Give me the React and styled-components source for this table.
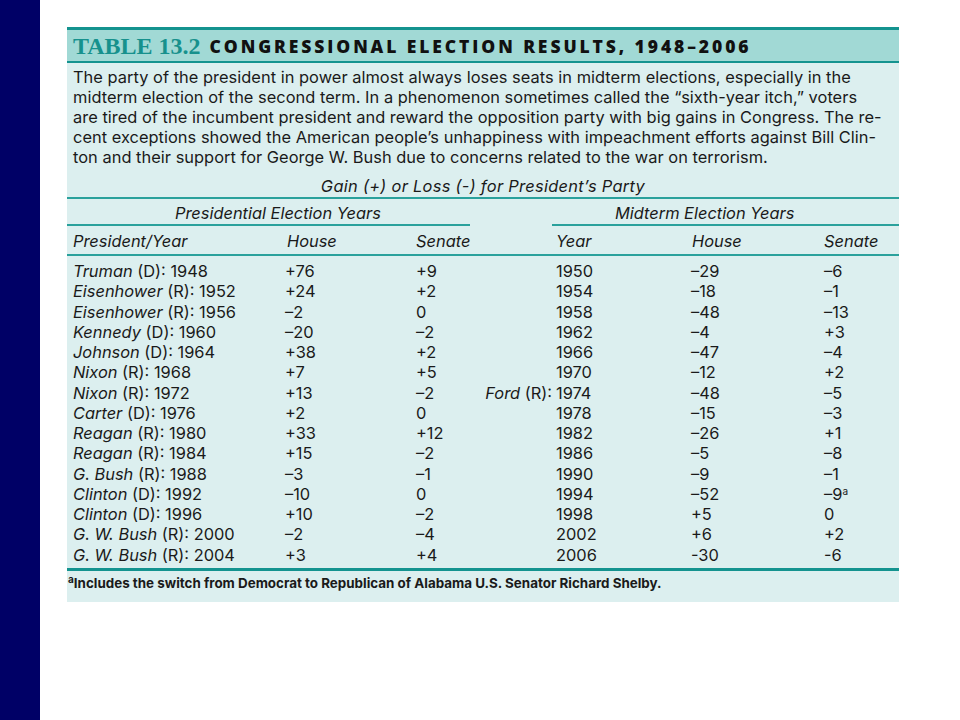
import React from 'react'
import styled, { createGlobalStyle } from 'styled-components'

const Global = createGlobalStyle`
  html, body { margin: 0; padding: 0; background: #ffffff; }
  body { font-family: 'Inter', 'Open Sans', sans-serif; }
`

const Page = styled.div`
  width: 960px;
  height: 720px;
  display: flex;
  overflow: hidden;
  background: #ffffff;
`

const SideBar = styled.div`
  width: 40px;
  background: #000066;
  flex-shrink: 0;
`

const Main = styled.div`
  flex: 1;
  padding: 27px 0 0 27px;
`

const Panel = styled.div`
  width: 832px;
  background: #dcefef;
  color: #1a1a1a;
  padding-bottom: 11px;
`

const TitleBar = styled.div`
  background: #a1d9d5;
  border-top: 3px solid #14938f;
  border-bottom: 2px solid #14938f;
  height: 31px;
  display: flex;
  align-items: center;
  padding-left: 6px;
  gap: 9px;
`

const TableNo = styled.span`
  font-family: 'Liberation Serif', serif;
  font-weight: bold;
  color: #17918d;
  font-size: 24px;
  line-height: 28px;
`

const TableTitle = styled.span`
  font-family: 'Open Sans', sans-serif;
  font-weight: 800;
  font-size: 17.5px;
  line-height: 24px;
  letter-spacing: 2.9px;
  color: #111;
`

const Intro = styled.p`
  margin: 4px 0 0;
  padding: 0 6px;
  font-size: 16.4px;
  line-height: 20px;
  letter-spacing: 0.03px;
  white-space: nowrap;
`

const Caption = styled.div`
  text-align: center;
  font-style: italic;
  font-size: 16.4px;
  line-height: 20px;
  letter-spacing: 0.3px;
  margin-top: 9px;
  padding-bottom: 1px;
  border-bottom: 2px solid #2aa19c;
`

const Groups = styled.div`
  display: grid;
  grid-template-columns: 403px 82px 347px;
  margin-top: 4px;
`

const GroupHead = styled.div`
  font-style: italic;
  font-size: 16.4px;
  line-height: 21px;
  padding-left: ${p => p.$pad}px;
  border-bottom: ${p => (p.$line ? '2px solid #2aa19c' : 'none')};
`

const Grid = styled.div`
  display: grid;
  grid-template-columns: 212px 131px 65px 71px 139px 133px 75px;
  padding-left: 6px;
`

const HeadRow = styled.div`
  display: contents;
`

const HeadCell = styled.div`
  font-style: italic;
  font-size: 16.4px;
  line-height: 20px;
  padding: 5px 0 3px;
  border-bottom: 2px solid #2aa19c;
  margin-left: ${p => (p.$first ? '-6px' : '0')};
  padding-left: ${p => (p.$first ? 6 : p.$pad || 0)}px;
`

const Cell = styled.div`
  font-size: 16.4px;
  line-height: 20.25px;
  padding-left: ${p => p.$pad || 0}px;
  text-align: ${p => (p.$right ? 'right' : 'left')};
  white-space: nowrap;
  padding-top: ${p => (p.$top ? 5 : 0)}px;
  padding-bottom: ${p => (p.$bottom ? 3 : 0)}px;
  border-bottom: ${p => (p.$bottom ? '3px solid #14938f' : 'none')};
  margin-left: ${p => (p.$first && p.$bottom ? '-6px' : '0')};
  ${p => (p.$first && p.$bottom ? 'padding-left: 6px;' : '')}
`

const Name = styled.i``

const Sup = styled.sup`
  font-size: 10px;
  line-height: 0;
  vertical-align: 5px;
`

const Footnote = styled.div`
  font-size: 13.4px;
  line-height: 16px;
  font-weight: 700;
  padding: 4px 0 0 1px;
`

const intro = [
  'The party of the president in power almost always loses seats in midterm elections, especially in the',
  'midterm election of the second term. In a phenomenon sometimes called the “sixth-year itch,” voters',
  'are tired of the incumbent president and reward the opposition party with big gains in Congress. The re-',
  'cent exceptions showed the American people’s unhappiness with impeachment efforts against Bill Clin-',
  'ton and their support for George W. Bush due to concerns related to the war on terrorism.',
]

const rows = [
  ['Truman', 'D', 1948, '+76', '+9', '', 1950, '–29', '–6'],
  ['Eisenhower', 'R', 1952, '+24', '+2', '', 1954, '–18', '–1'],
  ['Eisenhower', 'R', 1956, '–2', '0', '', 1958, '–48', '–13'],
  ['Kennedy', 'D', 1960, '–20', '–2', '', 1962, '–4', '+3'],
  ['Johnson', 'D', 1964, '+38', '+2', '', 1966, '–47', '–4'],
  ['Nixon', 'R', 1968, '+7', '+5', '', 1970, '–12', '+2'],
  ['Nixon', 'R', 1972, '+13', '–2', 'Ford', 1974, '–48', '–5'],
  ['Carter', 'D', 1976, '+2', '0', '', 1978, '–15', '–3'],
  ['Reagan', 'R', 1980, '+33', '+12', '', 1982, '–26', '+1'],
  ['Reagan', 'R', 1984, '+15', '–2', '', 1986, '–5', '–8'],
  ['G. Bush', 'R', 1988, '–3', '–1', '', 1990, '–9', '–1'],
  ['Clinton', 'D', 1992, '–10', '0', '', 1994, '–52', '–9a'],
  ['Clinton', 'D', 1996, '+10', '–2', '', 1998, '+5', '0'],
  ['G. W. Bush', 'R', 2000, '–2', '–4', '', 2002, '+6', '+2'],
  ['G. W. Bush', 'R', 2004, '+3', '+4', '', 2006, '-30', '-6'],
]

const App = () => {
  return (
    <Page>
      <Global />
      <SideBar />
      <Main>
        <Panel>
          <TitleBar>
            <TableNo>TABLE 13.2</TableNo>
            <TableTitle>CONGRESSIONAL ELECTION RESULTS, 1948–2006</TableTitle>
          </TitleBar>
          <Intro>
            {intro.map((l, i) => (
              <React.Fragment key={i}>{l}{i < intro.length - 1 && <br />}</React.Fragment>
            ))}
          </Intro>
          <Caption>Gain (+) or Loss (-) for President’s Party</Caption>
          <Groups>
            <GroupHead $pad={108} $line>Presidential Election Years</GroupHead>
            <GroupHead />
            <GroupHead $pad={63} $line>Midterm Election Years</GroupHead>
          </Groups>
          <Grid>
            <HeadRow>
              <HeadCell $first>President/Year</HeadCell>
              <HeadCell $pad={2}>House</HeadCell>
              <HeadCell>Senate</HeadCell>
              <HeadCell />
              <HeadCell $pad={4}>Year</HeadCell>
              <HeadCell $pad={1}>House</HeadCell>
              <HeadCell $pad={0}>Senate</HeadCell>
            </HeadRow>
            {rows.map((r, i) => {
              const top = i === 0
              const bottom = i === rows.length - 1
              const sen = r[8].endsWith('a') ? <>{r[8].slice(0, -1)}<Sup>a</Sup></> : r[8]
              return (
                <React.Fragment key={i}>
                  <Cell $top={top} $bottom={bottom} $first><Name>{r[0]}</Name> ({r[1]}): {r[2]}</Cell>
                  <Cell $top={top} $bottom={bottom}>{r[3]}</Cell>
                  <Cell $top={top} $bottom={bottom}>{r[4]}</Cell>
                  <Cell $top={top} $bottom={bottom} $right>{r[5] ? <><Name>{r[5]}</Name> (R):</> : ''}</Cell>
                  <Cell $top={top} $bottom={bottom} $pad={4}>{r[6]}</Cell>
                  <Cell $top={top} $bottom={bottom}>{r[7]}</Cell>
                  <Cell $top={top} $bottom={bottom}>{sen}</Cell>
                </React.Fragment>
              )
            })}
          </Grid>
          <Footnote><Sup>a</Sup>Includes the switch from Democrat to Republican of Alabama U.S. Senator Richard Shelby.</Footnote>
        </Panel>
      </Main>
    </Page>
  )
}

export default App
